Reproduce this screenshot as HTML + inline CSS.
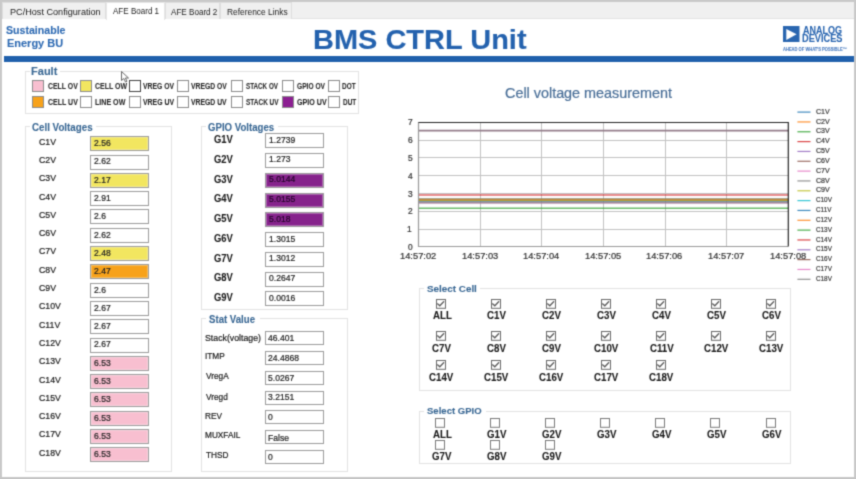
<!DOCTYPE html><html><head><meta charset="utf-8"><style>

*{box-sizing:border-box;margin:0;padding:0}
html,body{width:856px;height:479px;overflow:hidden;background:#fff;font-family:"Liberation Sans",sans-serif}
body{filter:url(#soft)}
.abs{position:absolute}
.t{position:absolute;white-space:nowrap;line-height:1;transform-origin:0 0}
.grp{position:absolute;border:1px solid #e3e3e3}
.fb{position:absolute;width:12px;height:12px;border:1px solid #8c8c8c;background:#fff}
.tb{position:absolute;width:59px;height:15px;border:1px solid #9c9c9c;background:#fff;box-shadow:inset 0 0 0 1px rgba(255,255,255,0.3)}

</style></head><body>
<svg width="0" height="0" style="position:absolute;left:0;top:0"><filter id="soft" x="0" y="0" width="100%" height="100%" color-interpolation-filters="sRGB"><feConvolveMatrix order="3" kernelMatrix="0.028 0.111 0.028 0.111 0.444 0.111 0.028 0.111 0.028" divisor="1" edgeMode="duplicate" preserveAlpha="true"/></filter></svg>
<div class="abs" style="left:0;top:0;width:856px;height:2px;background:#c9c9c9"></div>
<div class="abs" style="left:2px;top:2px;width:852px;height:16.5px;background:#f0f0f0;border-bottom:1px solid #e3e3e3"></div>
<div class="abs" style="left:0;top:0;width:2px;height:479px;background:#c9c9c9"></div>
<div class="abs" style="left:854px;top:0;width:2px;height:479px;background:#c9c9c9"></div>
<div class="abs" style="left:0;top:477px;width:856px;height:2px;background:#c6c6c6"></div>
<div class="abs" style="left:2px;top:2px;width:104px;height:16.5px;background:#f0f0f0;border:1px solid #dedede;border-bottom:none"></div>
<div class="t" style="left:9.89px;top:8.00px;font-size:9px;font-weight:400;color:#222;-webkit-text-stroke:0.22px currentColor;transform:scaleX(1.0125);-webkit-text-stroke:0;">PC/Host Configuration</div>
<div class="abs" style="left:106px;top:2px;width:59px;height:17.5px;background:#fff;border:1px solid #e6e6e6;border-bottom:none"></div>
<div class="t" style="left:113.40px;top:6.60px;font-size:9px;font-weight:400;color:#222;-webkit-text-stroke:0.22px currentColor;transform:scaleX(0.8941);-webkit-text-stroke:0;">AFE Board 1</div>
<div class="abs" style="left:165px;top:2px;width:55px;height:16.5px;background:#f0f0f0;border:1px solid #dedede;border-bottom:none"></div>
<div class="t" style="left:170.60px;top:8.20px;font-size:9px;font-weight:400;color:#222;-webkit-text-stroke:0.22px currentColor;transform:scaleX(0.9000);-webkit-text-stroke:0;">AFE Board 2</div>
<div class="abs" style="left:220px;top:2px;width:72px;height:16.5px;background:#f0f0f0;border:1px solid #dedede;border-bottom:none"></div>
<div class="t" style="left:227.07px;top:8.20px;font-size:9px;font-weight:400;color:#222;-webkit-text-stroke:0.22px currentColor;transform:scaleX(0.9328);-webkit-text-stroke:0;">Reference Links</div>
<div class="t" style="left:6.00px;top:24.60px;font-size:10.6px;font-weight:700;color:#2f6bb3;-webkit-text-stroke:0.1px currentColor;">Sustainable</div>
<div class="t" style="left:7.06px;top:38.20px;font-size:10.6px;font-weight:700;color:#2f6bb3;-webkit-text-stroke:0.1px currentColor;transform:scaleX(1.0358);">Energy BU</div>
<div class="t" style="left:313.47px;top:25.30px;font-size:28.5px;font-weight:700;color:#2462ae;-webkit-text-stroke:0.1px currentColor;transform:scaleX(1.0168);">BMS CTRL Unit</div>
<div class="abs" style="left:3.5px;top:56px;width:850px;height:6px;background:#2060ac"></div>
<svg class="abs" style="left:783px;top:25.8px" width="16.5" height="16.5" viewBox="0 0 16.5 16.5"><rect width="16.5" height="16.5" fill="#2a66b0"/><path d="M3.3 3.1 L13.6 8.25 L3.3 13.9 Z" fill="#fff"/></svg>
<div class="t" style="left:803.10px;top:25.00px;font-size:10.6px;font-weight:700;color:#2a66b0;-webkit-text-stroke:0.1px currentColor;transform:scaleX(0.8500);">ANALOG</div>
<div class="t" style="left:802.23px;top:33.30px;font-size:10.6px;font-weight:700;color:#2a66b0;-webkit-text-stroke:0.1px currentColor;transform:scaleX(0.8689);">DEVICES</div>
<div class="t" style="left:782.70px;top:46.80px;font-size:5px;font-weight:700;color:#4a7cc0;-webkit-text-stroke:0.1px currentColor;transform:scaleX(0.8141);">AHEAD OF WHAT'S POSSIBLE™</div>
<div class="grp" style="left:25px;top:71px;width:334px;height:43px"></div>
<div class="abs" style="left:30px;top:66px;width:30px;height:8px;background:#fff"></div>
<div class="t" style="left:31.46px;top:65.90px;font-size:10.6px;font-weight:700;color:#3a6894;-webkit-text-stroke:0.1px currentColor;transform:scaleX(1.0417);">Fault</div>
<div class="fb" style="left:32px;top:79.7px;background:#f8bfd0"></div>
<div class="t" style="left:47.50px;top:82.50px;font-size:8.2px;font-weight:700;color:#2a2a2a;-webkit-text-stroke:0.1px currentColor;transform:scaleX(0.8429);">CELL OV</div>
<div class="fb" style="left:80.3px;top:79.7px;background:#f2e660"></div>
<div class="t" style="left:94.90px;top:82.50px;font-size:8.2px;font-weight:700;color:#2a2a2a;-webkit-text-stroke:0.1px currentColor;transform:scaleX(0.8526);">CELL OW</div>
<div class="fb" style="left:128.9px;top:79.7px;background:#fff;border-color:#444"></div>
<div class="t" style="left:142.70px;top:82.50px;font-size:8.2px;font-weight:700;color:#2a2a2a;-webkit-text-stroke:0.1px currentColor;transform:scaleX(0.8297);">VREG OV</div>
<div class="fb" style="left:177.2px;top:79.7px;background:#fff"></div>
<div class="t" style="left:191.00px;top:82.50px;font-size:8.2px;font-weight:700;color:#2a2a2a;-webkit-text-stroke:0.1px currentColor;transform:scaleX(0.8279);">VREGD OV</div>
<div class="fb" style="left:230.7px;top:79.7px;background:#fff"></div>
<div class="t" style="left:246.00px;top:82.50px;font-size:8.2px;font-weight:700;color:#2a2a2a;-webkit-text-stroke:0.1px currentColor;transform:scaleX(0.7667);">STACK OV</div>
<div class="fb" style="left:281.9px;top:79.7px;background:#fff"></div>
<div class="t" style="left:296.50px;top:82.50px;font-size:8.2px;font-weight:700;color:#2a2a2a;-webkit-text-stroke:0.1px currentColor;transform:scaleX(0.8086);">GPIO OV</div>
<div class="fb" style="left:328px;top:79.7px;background:#fff"></div>
<div class="t" style="left:342.40px;top:82.50px;font-size:8.2px;font-weight:700;color:#2a2a2a;-webkit-text-stroke:0.1px currentColor;transform:scaleX(0.7882);">DOT</div>
<div class="fb" style="left:32px;top:96.4px;background:#f7a21b"></div>
<div class="t" style="left:47.80px;top:99.20px;font-size:8.2px;font-weight:700;color:#2a2a2a;-webkit-text-stroke:0.1px currentColor;transform:scaleX(0.8543);">CELL UV</div>
<div class="fb" style="left:80.3px;top:96.4px;background:#fff"></div>
<div class="t" style="left:95.00px;top:99.20px;font-size:8.2px;font-weight:700;color:#2a2a2a;-webkit-text-stroke:0.1px currentColor;transform:scaleX(0.8657);">LINE OW</div>
<div class="fb" style="left:128.9px;top:96.4px;background:#fff"></div>
<div class="t" style="left:142.70px;top:99.20px;font-size:8.2px;font-weight:700;color:#2a2a2a;-webkit-text-stroke:0.1px currentColor;transform:scaleX(0.8432);">VREG UV</div>
<div class="fb" style="left:177.2px;top:96.4px;background:#fff"></div>
<div class="t" style="left:191.10px;top:99.20px;font-size:8.2px;font-weight:700;color:#2a2a2a;-webkit-text-stroke:0.1px currentColor;transform:scaleX(0.8326);">VREGD UV</div>
<div class="fb" style="left:230.7px;top:96.4px;background:#fff"></div>
<div class="t" style="left:246.30px;top:99.20px;font-size:8.2px;font-weight:700;color:#2a2a2a;-webkit-text-stroke:0.1px currentColor;transform:scaleX(0.7902);">STACK UV</div>
<div class="fb" style="left:281.9px;top:96.4px;background:#8c1f92"></div>
<div class="t" style="left:296.50px;top:99.20px;font-size:8.2px;font-weight:700;color:#2a2a2a;-webkit-text-stroke:0.1px currentColor;transform:scaleX(0.8706);">GPIO UV</div>
<div class="fb" style="left:328px;top:96.4px;background:#fff"></div>
<div class="t" style="left:342.50px;top:99.20px;font-size:8.2px;font-weight:700;color:#2a2a2a;-webkit-text-stroke:0.1px currentColor;transform:scaleX(0.7824);">DUT</div>
<div class="grp" style="left:25px;top:126px;width:147px;height:345.5px"></div>
<div class="abs" style="left:30px;top:121px;width:66px;height:8px;background:#fff"></div>
<div class="t" style="left:32.10px;top:123.10px;font-size:10px;font-weight:700;color:#3a6894;-webkit-text-stroke:0.1px currentColor;transform:scaleX(0.9758);">Cell Voltages</div>
<div class="t" style="left:38.70px;top:136.60px;font-size:9.5px;font-weight:400;color:#1a1a1a;-webkit-text-stroke:0.22px currentColor;transform:scaleX(0.9200);">C1V</div>
<div class="tb" style="left:89.8px;top:136.2px;background:#f2e660"></div>
<div class="t" style="left:93.50px;top:139.10px;font-size:9px;font-weight:400;color:#222;-webkit-text-stroke:0.22px currentColor;transform:scaleX(0.9500);">2.56</div>
<div class="t" style="left:38.70px;top:154.90px;font-size:9.5px;font-weight:400;color:#1a1a1a;-webkit-text-stroke:0.22px currentColor;transform:scaleX(0.9200);">C2V</div>
<div class="tb" style="left:89.8px;top:154.5px;background:#fff"></div>
<div class="t" style="left:93.50px;top:157.40px;font-size:9px;font-weight:400;color:#222;-webkit-text-stroke:0.22px currentColor;transform:scaleX(0.9500);">2.62</div>
<div class="t" style="left:38.70px;top:173.20px;font-size:9.5px;font-weight:400;color:#1a1a1a;-webkit-text-stroke:0.22px currentColor;transform:scaleX(0.9200);">C3V</div>
<div class="tb" style="left:89.8px;top:172.8px;background:#f2e660"></div>
<div class="t" style="left:93.50px;top:175.70px;font-size:9px;font-weight:400;color:#222;-webkit-text-stroke:0.22px currentColor;transform:scaleX(0.9500);">2.17</div>
<div class="t" style="left:38.70px;top:191.50px;font-size:9.5px;font-weight:400;color:#1a1a1a;-webkit-text-stroke:0.22px currentColor;transform:scaleX(0.9200);">C4V</div>
<div class="tb" style="left:89.8px;top:191.1px;background:#fff"></div>
<div class="t" style="left:93.50px;top:194.00px;font-size:9px;font-weight:400;color:#222;-webkit-text-stroke:0.22px currentColor;transform:scaleX(0.9500);">2.91</div>
<div class="t" style="left:38.70px;top:209.80px;font-size:9.5px;font-weight:400;color:#1a1a1a;-webkit-text-stroke:0.22px currentColor;transform:scaleX(0.9200);">C5V</div>
<div class="tb" style="left:89.8px;top:209.4px;background:#fff"></div>
<div class="t" style="left:93.50px;top:212.30px;font-size:9px;font-weight:400;color:#222;-webkit-text-stroke:0.22px currentColor;transform:scaleX(0.9500);">2.6</div>
<div class="t" style="left:38.70px;top:228.10px;font-size:9.5px;font-weight:400;color:#1a1a1a;-webkit-text-stroke:0.22px currentColor;transform:scaleX(0.9200);">C6V</div>
<div class="tb" style="left:89.8px;top:227.7px;background:#fff"></div>
<div class="t" style="left:93.50px;top:230.60px;font-size:9px;font-weight:400;color:#222;-webkit-text-stroke:0.22px currentColor;transform:scaleX(0.9500);">2.62</div>
<div class="t" style="left:38.70px;top:246.40px;font-size:9.5px;font-weight:400;color:#1a1a1a;-webkit-text-stroke:0.22px currentColor;transform:scaleX(0.9200);">C7V</div>
<div class="tb" style="left:89.8px;top:246.0px;background:#f2e660"></div>
<div class="t" style="left:93.50px;top:248.90px;font-size:9px;font-weight:400;color:#222;-webkit-text-stroke:0.22px currentColor;transform:scaleX(0.9500);">2.48</div>
<div class="t" style="left:38.70px;top:264.70px;font-size:9.5px;font-weight:400;color:#1a1a1a;-webkit-text-stroke:0.22px currentColor;transform:scaleX(0.9200);">C8V</div>
<div class="tb" style="left:89.8px;top:264.3px;background:#f7a21b"></div>
<div class="t" style="left:93.50px;top:267.20px;font-size:9px;font-weight:400;color:#222;-webkit-text-stroke:0.22px currentColor;transform:scaleX(0.9500);">2.47</div>
<div class="t" style="left:38.70px;top:283.00px;font-size:9.5px;font-weight:400;color:#1a1a1a;-webkit-text-stroke:0.22px currentColor;transform:scaleX(0.9200);">C9V</div>
<div class="tb" style="left:89.8px;top:282.6px;background:#fff"></div>
<div class="t" style="left:93.50px;top:285.50px;font-size:9px;font-weight:400;color:#222;-webkit-text-stroke:0.22px currentColor;transform:scaleX(0.9500);">2.6</div>
<div class="t" style="left:38.70px;top:301.30px;font-size:9.5px;font-weight:400;color:#1a1a1a;-webkit-text-stroke:0.22px currentColor;transform:scaleX(0.9200);">C10V</div>
<div class="tb" style="left:89.8px;top:300.9px;background:#fff"></div>
<div class="t" style="left:93.50px;top:303.80px;font-size:9px;font-weight:400;color:#222;-webkit-text-stroke:0.22px currentColor;transform:scaleX(0.9500);">2.67</div>
<div class="t" style="left:38.70px;top:319.60px;font-size:9.5px;font-weight:400;color:#1a1a1a;-webkit-text-stroke:0.22px currentColor;transform:scaleX(0.9200);">C11V</div>
<div class="tb" style="left:89.8px;top:319.2px;background:#fff"></div>
<div class="t" style="left:93.50px;top:322.10px;font-size:9px;font-weight:400;color:#222;-webkit-text-stroke:0.22px currentColor;transform:scaleX(0.9500);">2.67</div>
<div class="t" style="left:38.70px;top:337.90px;font-size:9.5px;font-weight:400;color:#1a1a1a;-webkit-text-stroke:0.22px currentColor;transform:scaleX(0.9200);">C12V</div>
<div class="tb" style="left:89.8px;top:337.5px;background:#fff"></div>
<div class="t" style="left:93.50px;top:340.40px;font-size:9px;font-weight:400;color:#222;-webkit-text-stroke:0.22px currentColor;transform:scaleX(0.9500);">2.67</div>
<div class="t" style="left:38.70px;top:356.20px;font-size:9.5px;font-weight:400;color:#1a1a1a;-webkit-text-stroke:0.22px currentColor;transform:scaleX(0.9200);">C13V</div>
<div class="tb" style="left:89.8px;top:355.8px;background:#f8bfd0"></div>
<div class="t" style="left:93.50px;top:358.70px;font-size:9px;font-weight:400;color:#222;-webkit-text-stroke:0.22px currentColor;transform:scaleX(0.9500);">6.53</div>
<div class="t" style="left:38.70px;top:374.50px;font-size:9.5px;font-weight:400;color:#1a1a1a;-webkit-text-stroke:0.22px currentColor;transform:scaleX(0.9200);">C14V</div>
<div class="tb" style="left:89.8px;top:374.1px;background:#f8bfd0"></div>
<div class="t" style="left:93.50px;top:377.00px;font-size:9px;font-weight:400;color:#222;-webkit-text-stroke:0.22px currentColor;transform:scaleX(0.9500);">6.53</div>
<div class="t" style="left:38.70px;top:392.80px;font-size:9.5px;font-weight:400;color:#1a1a1a;-webkit-text-stroke:0.22px currentColor;transform:scaleX(0.9200);">C15V</div>
<div class="tb" style="left:89.8px;top:392.4px;background:#f8bfd0"></div>
<div class="t" style="left:93.50px;top:395.30px;font-size:9px;font-weight:400;color:#222;-webkit-text-stroke:0.22px currentColor;transform:scaleX(0.9500);">6.53</div>
<div class="t" style="left:38.70px;top:411.10px;font-size:9.5px;font-weight:400;color:#1a1a1a;-webkit-text-stroke:0.22px currentColor;transform:scaleX(0.9200);">C16V</div>
<div class="tb" style="left:89.8px;top:410.7px;background:#f8bfd0"></div>
<div class="t" style="left:93.50px;top:413.60px;font-size:9px;font-weight:400;color:#222;-webkit-text-stroke:0.22px currentColor;transform:scaleX(0.9500);">6.53</div>
<div class="t" style="left:38.70px;top:429.40px;font-size:9.5px;font-weight:400;color:#1a1a1a;-webkit-text-stroke:0.22px currentColor;transform:scaleX(0.9200);">C17V</div>
<div class="tb" style="left:89.8px;top:429.0px;background:#f8bfd0"></div>
<div class="t" style="left:93.50px;top:431.90px;font-size:9px;font-weight:400;color:#222;-webkit-text-stroke:0.22px currentColor;transform:scaleX(0.9500);">6.53</div>
<div class="t" style="left:38.70px;top:447.70px;font-size:9.5px;font-weight:400;color:#1a1a1a;-webkit-text-stroke:0.22px currentColor;transform:scaleX(0.9200);">C18V</div>
<div class="tb" style="left:89.8px;top:447.3px;background:#f8bfd0"></div>
<div class="t" style="left:93.50px;top:450.20px;font-size:9px;font-weight:400;color:#222;-webkit-text-stroke:0.22px currentColor;transform:scaleX(0.9500);">6.53</div>
<div class="grp" style="left:201px;top:126px;width:147px;height:183.5px"></div>
<div class="abs" style="left:206px;top:121px;width:72px;height:8px;background:#fff"></div>
<div class="t" style="left:208.20px;top:123.10px;font-size:10px;font-weight:700;color:#3a6894;-webkit-text-stroke:0.1px currentColor;transform:scaleX(0.9623);">GPIO Voltages</div>
<div class="t" style="left:214.30px;top:134.00px;font-size:10.8px;font-weight:700;color:#1a1a1a;-webkit-text-stroke:0.1px currentColor;transform:scaleX(0.8727);">G1V</div>
<div class="tb" style="left:265.2px;top:133.2px;background:#fff"></div>
<div class="t" style="left:268.70px;top:135.70px;font-size:9px;font-weight:400;color:#222;-webkit-text-stroke:0.22px currentColor;transform:scaleX(0.9500);">1.2739</div>
<div class="t" style="left:214.30px;top:153.78px;font-size:10.8px;font-weight:700;color:#1a1a1a;-webkit-text-stroke:0.1px currentColor;transform:scaleX(0.8727);">G2V</div>
<div class="tb" style="left:265.2px;top:153.0px;background:#fff"></div>
<div class="t" style="left:268.70px;top:155.48px;font-size:9px;font-weight:400;color:#222;-webkit-text-stroke:0.22px currentColor;transform:scaleX(0.9500);">1.273</div>
<div class="t" style="left:214.30px;top:173.56px;font-size:10.8px;font-weight:700;color:#1a1a1a;-webkit-text-stroke:0.1px currentColor;transform:scaleX(0.8727);">G3V</div>
<div class="tb" style="left:265.2px;top:172.8px;background:#86238c"></div>
<div class="t" style="left:268.70px;top:175.26px;font-size:9px;font-weight:400;color:#24062a;-webkit-text-stroke:0.22px currentColor;transform:scaleX(0.9500);">5.0144</div>
<div class="t" style="left:214.30px;top:193.34px;font-size:10.8px;font-weight:700;color:#1a1a1a;-webkit-text-stroke:0.1px currentColor;transform:scaleX(0.8727);">G4V</div>
<div class="tb" style="left:265.2px;top:192.5px;background:#86238c"></div>
<div class="t" style="left:268.70px;top:195.04px;font-size:9px;font-weight:400;color:#24062a;-webkit-text-stroke:0.22px currentColor;transform:scaleX(0.9500);">5.0155</div>
<div class="t" style="left:214.30px;top:213.12px;font-size:10.8px;font-weight:700;color:#1a1a1a;-webkit-text-stroke:0.1px currentColor;transform:scaleX(0.8727);">G5V</div>
<div class="tb" style="left:265.2px;top:212.3px;background:#86238c"></div>
<div class="t" style="left:268.70px;top:214.82px;font-size:9px;font-weight:400;color:#24062a;-webkit-text-stroke:0.22px currentColor;transform:scaleX(0.9500);">5.018</div>
<div class="t" style="left:214.30px;top:232.90px;font-size:10.8px;font-weight:700;color:#1a1a1a;-webkit-text-stroke:0.1px currentColor;transform:scaleX(0.8727);">G6V</div>
<div class="tb" style="left:265.2px;top:232.1px;background:#fff"></div>
<div class="t" style="left:268.70px;top:234.60px;font-size:9px;font-weight:400;color:#222;-webkit-text-stroke:0.22px currentColor;transform:scaleX(0.9500);">1.3015</div>
<div class="t" style="left:214.30px;top:252.68px;font-size:10.8px;font-weight:700;color:#1a1a1a;-webkit-text-stroke:0.1px currentColor;transform:scaleX(0.8727);">G7V</div>
<div class="tb" style="left:265.2px;top:251.9px;background:#fff"></div>
<div class="t" style="left:268.70px;top:254.38px;font-size:9px;font-weight:400;color:#222;-webkit-text-stroke:0.22px currentColor;transform:scaleX(0.9500);">1.3012</div>
<div class="t" style="left:214.30px;top:272.46px;font-size:10.8px;font-weight:700;color:#1a1a1a;-webkit-text-stroke:0.1px currentColor;transform:scaleX(0.8727);">G8V</div>
<div class="tb" style="left:265.2px;top:271.7px;background:#fff"></div>
<div class="t" style="left:268.70px;top:274.16px;font-size:9px;font-weight:400;color:#222;-webkit-text-stroke:0.22px currentColor;transform:scaleX(0.9500);">0.2647</div>
<div class="t" style="left:214.30px;top:292.24px;font-size:10.8px;font-weight:700;color:#1a1a1a;-webkit-text-stroke:0.1px currentColor;transform:scaleX(0.8727);">G9V</div>
<div class="tb" style="left:265.2px;top:291.4px;background:#fff"></div>
<div class="t" style="left:268.70px;top:293.94px;font-size:9px;font-weight:400;color:#222;-webkit-text-stroke:0.22px currentColor;transform:scaleX(0.9500);">0.0016</div>
<div class="grp" style="left:201px;top:318px;width:147px;height:153.5px"></div>
<div class="abs" style="left:206px;top:313px;width:54px;height:8px;background:#fff"></div>
<div class="t" style="left:208.90px;top:315.30px;font-size:10px;font-weight:700;color:#3a6894;-webkit-text-stroke:0.1px currentColor;transform:scaleX(0.9625);">Stat Value</div>
<div class="t" style="left:204.95px;top:333.70px;font-size:9.2px;font-weight:400;color:#1a1a1a;-webkit-text-stroke:0.22px currentColor;transform:scaleX(0.9526);">Stack(voltage)</div>
<div class="tb" style="left:265.1px;top:331.4px;height:14px"></div>
<div class="t" style="left:268.40px;top:334.10px;font-size:9px;font-weight:400;color:#222;-webkit-text-stroke:0.22px currentColor;transform:scaleX(0.9500);">46.401</div>
<div class="t" style="left:205.00px;top:352.45px;font-size:9.2px;font-weight:400;color:#1a1a1a;-webkit-text-stroke:0.22px currentColor;transform:scaleX(0.9000);">ITMP</div>
<div class="tb" style="left:265.1px;top:351.1px;height:14px"></div>
<div class="t" style="left:268.40px;top:353.85px;font-size:9px;font-weight:400;color:#222;-webkit-text-stroke:0.22px currentColor;transform:scaleX(0.9500);">24.4868</div>
<div class="t" style="left:205.90px;top:372.20px;font-size:9.2px;font-weight:400;color:#1a1a1a;-webkit-text-stroke:0.22px currentColor;transform:scaleX(0.9000);">VregA</div>
<div class="tb" style="left:265.1px;top:370.9px;height:14px"></div>
<div class="t" style="left:268.40px;top:373.60px;font-size:9px;font-weight:400;color:#222;-webkit-text-stroke:0.22px currentColor;transform:scaleX(0.9500);">5.0267</div>
<div class="t" style="left:205.90px;top:392.95px;font-size:9.2px;font-weight:400;color:#1a1a1a;-webkit-text-stroke:0.22px currentColor;transform:scaleX(0.9000);">Vregd</div>
<div class="tb" style="left:265.1px;top:390.6px;height:14px"></div>
<div class="t" style="left:268.40px;top:393.35px;font-size:9px;font-weight:400;color:#222;-webkit-text-stroke:0.22px currentColor;transform:scaleX(0.9500);">3.2151</div>
<div class="t" style="left:205.00px;top:411.70px;font-size:9.2px;font-weight:400;color:#1a1a1a;-webkit-text-stroke:0.22px currentColor;transform:scaleX(0.9000);">REV</div>
<div class="tb" style="left:265.1px;top:410.4px;height:14px"></div>
<div class="t" style="left:268.40px;top:413.10px;font-size:9px;font-weight:400;color:#222;-webkit-text-stroke:0.22px currentColor;transform:scaleX(0.9500);">0</div>
<div class="t" style="left:205.00px;top:431.45px;font-size:9.2px;font-weight:400;color:#1a1a1a;-webkit-text-stroke:0.22px currentColor;transform:scaleX(0.9000);">MUXFAIL</div>
<div class="tb" style="left:265.1px;top:430.1px;height:14px"></div>
<div class="t" style="left:268.40px;top:433.85px;font-size:9px;font-weight:400;color:#222;-webkit-text-stroke:0.22px currentColor;transform:scaleX(0.9500);">False</div>
<div class="t" style="left:205.90px;top:451.20px;font-size:9.2px;font-weight:400;color:#1a1a1a;-webkit-text-stroke:0.22px currentColor;transform:scaleX(0.9000);">THSD</div>
<div class="tb" style="left:265.1px;top:449.9px;height:14px"></div>
<div class="t" style="left:268.40px;top:452.60px;font-size:9px;font-weight:400;color:#222;-webkit-text-stroke:0.22px currentColor;transform:scaleX(0.9500);">0</div>
<svg class="abs" style="left:0;top:0" width="856" height="479" viewBox="0 0 856 479"><line x1="418.6" y1="229.50" x2="788.3" y2="229.50" stroke="#c2c2c2" stroke-width="1"/><line x1="418.6" y1="211.50" x2="788.3" y2="211.50" stroke="#c2c2c2" stroke-width="1"/><line x1="418.6" y1="193.50" x2="788.3" y2="193.50" stroke="#c2c2c2" stroke-width="1"/><line x1="418.6" y1="175.50" x2="788.3" y2="175.50" stroke="#c2c2c2" stroke-width="1"/><line x1="418.6" y1="157.50" x2="788.3" y2="157.50" stroke="#c2c2c2" stroke-width="1"/><line x1="418.6" y1="140.50" x2="788.3" y2="140.50" stroke="#c2c2c2" stroke-width="1"/><line x1="480.50" y1="122.3" x2="480.50" y2="246.8" stroke="#c2c2c2" stroke-width="1"/><line x1="541.50" y1="122.3" x2="541.50" y2="246.8" stroke="#c2c2c2" stroke-width="1"/><line x1="603.50" y1="122.3" x2="603.50" y2="246.8" stroke="#c2c2c2" stroke-width="1"/><line x1="665.50" y1="122.3" x2="665.50" y2="246.8" stroke="#c2c2c2" stroke-width="1"/><line x1="726.50" y1="122.3" x2="726.50" y2="246.8" stroke="#c2c2c2" stroke-width="1"/><line x1="418.6" y1="201.27" x2="788.3" y2="201.27" stroke="#1f77b4" stroke-opacity="0.7" stroke-width="1.5"/><line x1="418.6" y1="200.20" x2="788.3" y2="200.20" stroke="#ff7f0e" stroke-opacity="0.7" stroke-width="1.5"/><line x1="418.6" y1="208.21" x2="788.3" y2="208.21" stroke="#2ca02c" stroke-opacity="0.7" stroke-width="1.5"/><line x1="418.6" y1="195.04" x2="788.3" y2="195.04" stroke="#d62728" stroke-opacity="0.7" stroke-width="1.5"/><line x1="418.6" y1="200.56" x2="788.3" y2="200.56" stroke="#9467bd" stroke-opacity="0.7" stroke-width="1.5"/><line x1="418.6" y1="200.20" x2="788.3" y2="200.20" stroke="#8c564b" stroke-opacity="0.7" stroke-width="1.5"/><line x1="418.6" y1="202.69" x2="788.3" y2="202.69" stroke="#e377c2" stroke-opacity="0.7" stroke-width="1.5"/><line x1="418.6" y1="202.87" x2="788.3" y2="202.87" stroke="#7f7f7f" stroke-opacity="0.7" stroke-width="1.5"/><line x1="418.6" y1="200.56" x2="788.3" y2="200.56" stroke="#bcbd22" stroke-opacity="0.7" stroke-width="1.5"/><line x1="418.6" y1="199.31" x2="788.3" y2="199.31" stroke="#17becf" stroke-opacity="0.7" stroke-width="1.5"/><line x1="418.6" y1="199.31" x2="788.3" y2="199.31" stroke="#1f77b4" stroke-opacity="0.7" stroke-width="1.5"/><line x1="418.6" y1="199.31" x2="788.3" y2="199.31" stroke="#ff7f0e" stroke-opacity="0.7" stroke-width="1.5"/><line x1="418.6" y1="130.66" x2="788.3" y2="130.66" stroke="#937c8a" stroke-width="1.7"/><path d="M418.5 122 V246.5 H788" fill="none" stroke="#9a9a9a" stroke-width="1.2"/><path d="M418.5 122.5 H788.3 V246.5" fill="none" stroke="#262626" stroke-width="1.2"/><line x1="797.4" y1="112.10" x2="810.5" y2="112.10" stroke="#1f77b4" stroke-opacity="0.85" stroke-width="1.2"/><line x1="797.4" y1="121.94" x2="810.5" y2="121.94" stroke="#ff7f0e" stroke-opacity="0.85" stroke-width="1.2"/><line x1="797.4" y1="131.77" x2="810.5" y2="131.77" stroke="#2ca02c" stroke-opacity="0.85" stroke-width="1.2"/><line x1="797.4" y1="141.60" x2="810.5" y2="141.60" stroke="#d62728" stroke-opacity="0.85" stroke-width="1.2"/><line x1="797.4" y1="151.44" x2="810.5" y2="151.44" stroke="#9467bd" stroke-opacity="0.85" stroke-width="1.2"/><line x1="797.4" y1="161.28" x2="810.5" y2="161.28" stroke="#8c564b" stroke-opacity="0.85" stroke-width="1.2"/><line x1="797.4" y1="171.11" x2="810.5" y2="171.11" stroke="#e377c2" stroke-opacity="0.85" stroke-width="1.2"/><line x1="797.4" y1="180.94" x2="810.5" y2="180.94" stroke="#7f7f7f" stroke-opacity="0.85" stroke-width="1.2"/><line x1="797.4" y1="190.78" x2="810.5" y2="190.78" stroke="#bcbd22" stroke-opacity="0.85" stroke-width="1.2"/><line x1="797.4" y1="200.62" x2="810.5" y2="200.62" stroke="#17becf" stroke-opacity="0.85" stroke-width="1.2"/><line x1="797.4" y1="210.45" x2="810.5" y2="210.45" stroke="#1f77b4" stroke-opacity="0.85" stroke-width="1.2"/><line x1="797.4" y1="220.28" x2="810.5" y2="220.28" stroke="#ff7f0e" stroke-opacity="0.85" stroke-width="1.2"/><line x1="797.4" y1="230.12" x2="810.5" y2="230.12" stroke="#2ca02c" stroke-opacity="0.85" stroke-width="1.2"/><line x1="797.4" y1="239.96" x2="810.5" y2="239.96" stroke="#d62728" stroke-opacity="0.85" stroke-width="1.2"/><line x1="797.4" y1="249.79" x2="810.5" y2="249.79" stroke="#9467bd" stroke-opacity="0.85" stroke-width="1.2"/><line x1="797.4" y1="259.62" x2="810.5" y2="259.62" stroke="#8c564b" stroke-opacity="0.85" stroke-width="1.2"/><line x1="797.4" y1="269.46" x2="810.5" y2="269.46" stroke="#e377c2" stroke-opacity="0.85" stroke-width="1.2"/><line x1="797.4" y1="279.30" x2="810.5" y2="279.30" stroke="#7f7f7f" stroke-opacity="0.85" stroke-width="1.2"/></svg>
<div class="t" style="left:408.00px;top:242.90px;font-size:8.4px;font-weight:400;color:#333;-webkit-text-stroke:0.22px currentColor;">0</div>
<div class="t" style="left:407.00px;top:225.11px;font-size:8.4px;font-weight:400;color:#333;-webkit-text-stroke:0.22px currentColor;">1</div>
<div class="t" style="left:408.00px;top:207.33px;font-size:8.4px;font-weight:400;color:#333;-webkit-text-stroke:0.22px currentColor;">2</div>
<div class="t" style="left:408.00px;top:189.54px;font-size:8.4px;font-weight:400;color:#333;-webkit-text-stroke:0.22px currentColor;">3</div>
<div class="t" style="left:408.00px;top:171.76px;font-size:8.4px;font-weight:400;color:#333;-webkit-text-stroke:0.22px currentColor;">4</div>
<div class="t" style="left:408.00px;top:153.97px;font-size:8.4px;font-weight:400;color:#333;-webkit-text-stroke:0.22px currentColor;">5</div>
<div class="t" style="left:408.00px;top:136.19px;font-size:8.4px;font-weight:400;color:#333;-webkit-text-stroke:0.22px currentColor;">6</div>
<div class="t" style="left:408.00px;top:118.40px;font-size:8.4px;font-weight:400;color:#333;-webkit-text-stroke:0.22px currentColor;">7</div>
<div class="t" style="left:399.96px;top:252.20px;font-size:9px;font-weight:400;color:#333;-webkit-text-stroke:0.22px currentColor;transform:scaleX(1.0353);">14:57:02</div>
<div class="t" style="left:461.58px;top:252.20px;font-size:9px;font-weight:400;color:#333;-webkit-text-stroke:0.22px currentColor;transform:scaleX(1.0353);">14:57:03</div>
<div class="t" style="left:523.20px;top:252.20px;font-size:9px;font-weight:400;color:#333;-webkit-text-stroke:0.22px currentColor;transform:scaleX(1.0353);">14:57:04</div>
<div class="t" style="left:584.81px;top:252.20px;font-size:9px;font-weight:400;color:#333;-webkit-text-stroke:0.22px currentColor;transform:scaleX(1.0353);">14:57:05</div>
<div class="t" style="left:646.43px;top:252.20px;font-size:9px;font-weight:400;color:#333;-webkit-text-stroke:0.22px currentColor;transform:scaleX(1.0353);">14:57:06</div>
<div class="t" style="left:708.05px;top:252.20px;font-size:9px;font-weight:400;color:#333;-webkit-text-stroke:0.22px currentColor;transform:scaleX(1.0353);">14:57:07</div>
<div class="t" style="left:769.66px;top:252.20px;font-size:9px;font-weight:400;color:#333;-webkit-text-stroke:0.22px currentColor;transform:scaleX(1.0353);">14:57:08</div>
<div class="t" style="left:815.70px;top:107.70px;font-size:7.3px;font-weight:400;color:#3a3a3a;-webkit-text-stroke:0.22px currentColor;transform:scaleX(0.9700);">C1V</div>
<div class="t" style="left:815.70px;top:117.53px;font-size:7.3px;font-weight:400;color:#3a3a3a;-webkit-text-stroke:0.22px currentColor;transform:scaleX(0.9700);">C2V</div>
<div class="t" style="left:815.70px;top:127.37px;font-size:7.3px;font-weight:400;color:#3a3a3a;-webkit-text-stroke:0.22px currentColor;transform:scaleX(0.9700);">C3V</div>
<div class="t" style="left:815.70px;top:137.20px;font-size:7.3px;font-weight:400;color:#3a3a3a;-webkit-text-stroke:0.22px currentColor;transform:scaleX(0.9700);">C4V</div>
<div class="t" style="left:815.70px;top:147.04px;font-size:7.3px;font-weight:400;color:#3a3a3a;-webkit-text-stroke:0.22px currentColor;transform:scaleX(0.9700);">C5V</div>
<div class="t" style="left:815.70px;top:156.88px;font-size:7.3px;font-weight:400;color:#3a3a3a;-webkit-text-stroke:0.22px currentColor;transform:scaleX(0.9700);">C6V</div>
<div class="t" style="left:815.70px;top:166.71px;font-size:7.3px;font-weight:400;color:#3a3a3a;-webkit-text-stroke:0.22px currentColor;transform:scaleX(0.9700);">C7V</div>
<div class="t" style="left:815.70px;top:176.54px;font-size:7.3px;font-weight:400;color:#3a3a3a;-webkit-text-stroke:0.22px currentColor;transform:scaleX(0.9700);">C8V</div>
<div class="t" style="left:815.70px;top:186.38px;font-size:7.3px;font-weight:400;color:#3a3a3a;-webkit-text-stroke:0.22px currentColor;transform:scaleX(0.9700);">C9V</div>
<div class="t" style="left:815.70px;top:196.22px;font-size:7.3px;font-weight:400;color:#3a3a3a;-webkit-text-stroke:0.22px currentColor;transform:scaleX(0.8700);">C10V</div>
<div class="t" style="left:815.70px;top:206.05px;font-size:7.3px;font-weight:400;color:#3a3a3a;-webkit-text-stroke:0.22px currentColor;transform:scaleX(0.8700);">C11V</div>
<div class="t" style="left:815.70px;top:215.88px;font-size:7.3px;font-weight:400;color:#3a3a3a;-webkit-text-stroke:0.22px currentColor;transform:scaleX(0.8700);">C12V</div>
<div class="t" style="left:815.70px;top:225.72px;font-size:7.3px;font-weight:400;color:#3a3a3a;-webkit-text-stroke:0.22px currentColor;transform:scaleX(0.8700);">C13V</div>
<div class="t" style="left:815.70px;top:235.56px;font-size:7.3px;font-weight:400;color:#3a3a3a;-webkit-text-stroke:0.22px currentColor;transform:scaleX(0.8700);">C14V</div>
<div class="t" style="left:815.70px;top:245.39px;font-size:7.3px;font-weight:400;color:#3a3a3a;-webkit-text-stroke:0.22px currentColor;transform:scaleX(0.8700);">C15V</div>
<div class="t" style="left:815.70px;top:255.23px;font-size:7.3px;font-weight:400;color:#3a3a3a;-webkit-text-stroke:0.22px currentColor;transform:scaleX(0.8700);">C16V</div>
<div class="t" style="left:815.70px;top:265.06px;font-size:7.3px;font-weight:400;color:#3a3a3a;-webkit-text-stroke:0.22px currentColor;transform:scaleX(0.8700);">C17V</div>
<div class="t" style="left:815.70px;top:274.90px;font-size:7.3px;font-weight:400;color:#3a3a3a;-webkit-text-stroke:0.22px currentColor;transform:scaleX(0.8700);">C18V</div>
<div class="t" style="left:504.89px;top:85.70px;font-size:14.3px;font-weight:400;color:#4a6f98;-webkit-text-stroke:0.22px currentColor;transform:scaleX(1.0055);">Cell voltage measurement</div>
<div class="grp" style="left:419px;top:288px;width:372px;height:103px"></div>
<div class="abs" style="left:424px;top:284px;width:56px;height:8px;background:#fff"></div>
<div class="t" style="left:426.80px;top:284.20px;font-size:9.8px;font-weight:700;color:#3a6894;-webkit-text-stroke:0.1px currentColor;transform:scaleX(1.0061);">Select Cell</div>
<svg class="abs" style="left:435.80px;top:298.8px" width="10" height="10" viewBox="0 0 10 10"><rect x="0.5" y="0.5" width="9" height="8.8" fill="#fff" stroke="#6a6a6a" stroke-width="1"/><path d="M1.3 4.5 L3.8 6.8 L8.1 2.3" fill="none" stroke="#5a5a5a" stroke-width="1.25"/></svg>
<svg class="abs" style="left:490.85px;top:298.8px" width="10" height="10" viewBox="0 0 10 10"><rect x="0.5" y="0.5" width="9" height="8.8" fill="#fff" stroke="#6a6a6a" stroke-width="1"/><path d="M1.3 4.5 L3.8 6.8 L8.1 2.3" fill="none" stroke="#5a5a5a" stroke-width="1.25"/></svg>
<svg class="abs" style="left:545.90px;top:298.8px" width="10" height="10" viewBox="0 0 10 10"><rect x="0.5" y="0.5" width="9" height="8.8" fill="#fff" stroke="#6a6a6a" stroke-width="1"/><path d="M1.3 4.5 L3.8 6.8 L8.1 2.3" fill="none" stroke="#5a5a5a" stroke-width="1.25"/></svg>
<svg class="abs" style="left:600.95px;top:298.8px" width="10" height="10" viewBox="0 0 10 10"><rect x="0.5" y="0.5" width="9" height="8.8" fill="#fff" stroke="#6a6a6a" stroke-width="1"/><path d="M1.3 4.5 L3.8 6.8 L8.1 2.3" fill="none" stroke="#5a5a5a" stroke-width="1.25"/></svg>
<svg class="abs" style="left:656.00px;top:298.8px" width="10" height="10" viewBox="0 0 10 10"><rect x="0.5" y="0.5" width="9" height="8.8" fill="#fff" stroke="#6a6a6a" stroke-width="1"/><path d="M1.3 4.5 L3.8 6.8 L8.1 2.3" fill="none" stroke="#5a5a5a" stroke-width="1.25"/></svg>
<svg class="abs" style="left:711.05px;top:298.8px" width="10" height="10" viewBox="0 0 10 10"><rect x="0.5" y="0.5" width="9" height="8.8" fill="#fff" stroke="#6a6a6a" stroke-width="1"/><path d="M1.3 4.5 L3.8 6.8 L8.1 2.3" fill="none" stroke="#5a5a5a" stroke-width="1.25"/></svg>
<svg class="abs" style="left:766.10px;top:298.8px" width="10" height="10" viewBox="0 0 10 10"><rect x="0.5" y="0.5" width="9" height="8.8" fill="#fff" stroke="#6a6a6a" stroke-width="1"/><path d="M1.3 4.5 L3.8 6.8 L8.1 2.3" fill="none" stroke="#5a5a5a" stroke-width="1.25"/></svg>
<svg class="abs" style="left:435.80px;top:331.2px" width="10" height="10" viewBox="0 0 10 10"><rect x="0.5" y="0.5" width="9" height="8.8" fill="#fff" stroke="#6a6a6a" stroke-width="1"/><path d="M1.3 4.5 L3.8 6.8 L8.1 2.3" fill="none" stroke="#5a5a5a" stroke-width="1.25"/></svg>
<svg class="abs" style="left:490.85px;top:331.2px" width="10" height="10" viewBox="0 0 10 10"><rect x="0.5" y="0.5" width="9" height="8.8" fill="#fff" stroke="#6a6a6a" stroke-width="1"/><path d="M1.3 4.5 L3.8 6.8 L8.1 2.3" fill="none" stroke="#5a5a5a" stroke-width="1.25"/></svg>
<svg class="abs" style="left:545.90px;top:331.2px" width="10" height="10" viewBox="0 0 10 10"><rect x="0.5" y="0.5" width="9" height="8.8" fill="#fff" stroke="#6a6a6a" stroke-width="1"/><path d="M1.3 4.5 L3.8 6.8 L8.1 2.3" fill="none" stroke="#5a5a5a" stroke-width="1.25"/></svg>
<svg class="abs" style="left:600.95px;top:331.2px" width="10" height="10" viewBox="0 0 10 10"><rect x="0.5" y="0.5" width="9" height="8.8" fill="#fff" stroke="#6a6a6a" stroke-width="1"/><path d="M1.3 4.5 L3.8 6.8 L8.1 2.3" fill="none" stroke="#5a5a5a" stroke-width="1.25"/></svg>
<svg class="abs" style="left:656.00px;top:331.2px" width="10" height="10" viewBox="0 0 10 10"><rect x="0.5" y="0.5" width="9" height="8.8" fill="#fff" stroke="#6a6a6a" stroke-width="1"/><path d="M1.3 4.5 L3.8 6.8 L8.1 2.3" fill="none" stroke="#5a5a5a" stroke-width="1.25"/></svg>
<svg class="abs" style="left:711.05px;top:331.2px" width="10" height="10" viewBox="0 0 10 10"><rect x="0.5" y="0.5" width="9" height="8.8" fill="#fff" stroke="#6a6a6a" stroke-width="1"/><path d="M1.3 4.5 L3.8 6.8 L8.1 2.3" fill="none" stroke="#5a5a5a" stroke-width="1.25"/></svg>
<svg class="abs" style="left:766.10px;top:331.2px" width="10" height="10" viewBox="0 0 10 10"><rect x="0.5" y="0.5" width="9" height="8.8" fill="#fff" stroke="#6a6a6a" stroke-width="1"/><path d="M1.3 4.5 L3.8 6.8 L8.1 2.3" fill="none" stroke="#5a5a5a" stroke-width="1.25"/></svg>
<svg class="abs" style="left:435.80px;top:360.4px" width="10" height="10" viewBox="0 0 10 10"><rect x="0.5" y="0.5" width="9" height="8.8" fill="#fff" stroke="#6a6a6a" stroke-width="1"/><path d="M1.3 4.5 L3.8 6.8 L8.1 2.3" fill="none" stroke="#5a5a5a" stroke-width="1.25"/></svg>
<svg class="abs" style="left:490.85px;top:360.4px" width="10" height="10" viewBox="0 0 10 10"><rect x="0.5" y="0.5" width="9" height="8.8" fill="#fff" stroke="#6a6a6a" stroke-width="1"/><path d="M1.3 4.5 L3.8 6.8 L8.1 2.3" fill="none" stroke="#5a5a5a" stroke-width="1.25"/></svg>
<svg class="abs" style="left:545.90px;top:360.4px" width="10" height="10" viewBox="0 0 10 10"><rect x="0.5" y="0.5" width="9" height="8.8" fill="#fff" stroke="#6a6a6a" stroke-width="1"/><path d="M1.3 4.5 L3.8 6.8 L8.1 2.3" fill="none" stroke="#5a5a5a" stroke-width="1.25"/></svg>
<svg class="abs" style="left:600.95px;top:360.4px" width="10" height="10" viewBox="0 0 10 10"><rect x="0.5" y="0.5" width="9" height="8.8" fill="#fff" stroke="#6a6a6a" stroke-width="1"/><path d="M1.3 4.5 L3.8 6.8 L8.1 2.3" fill="none" stroke="#5a5a5a" stroke-width="1.25"/></svg>
<svg class="abs" style="left:656.00px;top:360.4px" width="10" height="10" viewBox="0 0 10 10"><rect x="0.5" y="0.5" width="9" height="8.8" fill="#fff" stroke="#6a6a6a" stroke-width="1"/><path d="M1.3 4.5 L3.8 6.8 L8.1 2.3" fill="none" stroke="#5a5a5a" stroke-width="1.25"/></svg>
<div class="grp" style="left:419px;top:411px;width:372px;height:53px"></div>
<div class="abs" style="left:424px;top:406px;width:62px;height:8px;background:#fff"></div>
<div class="t" style="left:427.10px;top:405.90px;font-size:9.8px;font-weight:700;color:#3a6894;-webkit-text-stroke:0.1px currentColor;transform:scaleX(0.9750);">Select GPIO</div>
<svg class="abs" style="left:435.20px;top:418.3px" width="10" height="10" viewBox="0 0 10 10"><rect x="0.5" y="0.5" width="9" height="8.8" fill="#fff" stroke="#7a7a7a" stroke-width="1"/></svg>
<svg class="abs" style="left:490.25px;top:418.3px" width="10" height="10" viewBox="0 0 10 10"><rect x="0.5" y="0.5" width="9" height="8.8" fill="#fff" stroke="#7a7a7a" stroke-width="1"/></svg>
<svg class="abs" style="left:545.30px;top:418.3px" width="10" height="10" viewBox="0 0 10 10"><rect x="0.5" y="0.5" width="9" height="8.8" fill="#fff" stroke="#7a7a7a" stroke-width="1"/></svg>
<svg class="abs" style="left:600.35px;top:418.3px" width="10" height="10" viewBox="0 0 10 10"><rect x="0.5" y="0.5" width="9" height="8.8" fill="#fff" stroke="#7a7a7a" stroke-width="1"/></svg>
<svg class="abs" style="left:655.40px;top:418.3px" width="10" height="10" viewBox="0 0 10 10"><rect x="0.5" y="0.5" width="9" height="8.8" fill="#fff" stroke="#7a7a7a" stroke-width="1"/></svg>
<svg class="abs" style="left:710.45px;top:418.3px" width="10" height="10" viewBox="0 0 10 10"><rect x="0.5" y="0.5" width="9" height="8.8" fill="#fff" stroke="#7a7a7a" stroke-width="1"/></svg>
<svg class="abs" style="left:765.50px;top:418.3px" width="10" height="10" viewBox="0 0 10 10"><rect x="0.5" y="0.5" width="9" height="8.8" fill="#fff" stroke="#7a7a7a" stroke-width="1"/></svg>
<svg class="abs" style="left:435.20px;top:439.7px" width="10" height="10" viewBox="0 0 10 10"><rect x="0.5" y="0.5" width="9" height="8.8" fill="#fff" stroke="#7a7a7a" stroke-width="1"/></svg>
<svg class="abs" style="left:490.25px;top:439.7px" width="10" height="10" viewBox="0 0 10 10"><rect x="0.5" y="0.5" width="9" height="8.8" fill="#fff" stroke="#7a7a7a" stroke-width="1"/></svg>
<svg class="abs" style="left:545.30px;top:439.7px" width="10" height="10" viewBox="0 0 10 10"><rect x="0.5" y="0.5" width="9" height="8.8" fill="#fff" stroke="#7a7a7a" stroke-width="1"/></svg>
<div class="t" style="left:433.29px;top:310.70px;font-size:10px;font-weight:700;color:#1a1a1a;-webkit-text-stroke:0.1px currentColor;transform:scaleX(0.9700);">ALL</div>
<div class="t" style="left:487.14px;top:310.70px;font-size:10px;font-weight:700;color:#1a1a1a;-webkit-text-stroke:0.1px currentColor;transform:scaleX(0.9700);">C1V</div>
<div class="t" style="left:542.18px;top:310.70px;font-size:10px;font-weight:700;color:#1a1a1a;-webkit-text-stroke:0.1px currentColor;transform:scaleX(0.9700);">C2V</div>
<div class="t" style="left:597.23px;top:310.70px;font-size:10px;font-weight:700;color:#1a1a1a;-webkit-text-stroke:0.1px currentColor;transform:scaleX(0.9700);">C3V</div>
<div class="t" style="left:652.28px;top:310.70px;font-size:10px;font-weight:700;color:#1a1a1a;-webkit-text-stroke:0.1px currentColor;transform:scaleX(0.9700);">C4V</div>
<div class="t" style="left:707.33px;top:310.70px;font-size:10px;font-weight:700;color:#1a1a1a;-webkit-text-stroke:0.1px currentColor;transform:scaleX(0.9700);">C5V</div>
<div class="t" style="left:762.38px;top:310.70px;font-size:10px;font-weight:700;color:#1a1a1a;-webkit-text-stroke:0.1px currentColor;transform:scaleX(0.9700);">C6V</div>
<div class="t" style="left:432.09px;top:343.70px;font-size:10px;font-weight:700;color:#1a1a1a;-webkit-text-stroke:0.1px currentColor;transform:scaleX(0.9700);">C7V</div>
<div class="t" style="left:487.14px;top:343.70px;font-size:10px;font-weight:700;color:#1a1a1a;-webkit-text-stroke:0.1px currentColor;transform:scaleX(0.9700);">C8V</div>
<div class="t" style="left:542.18px;top:343.70px;font-size:10px;font-weight:700;color:#1a1a1a;-webkit-text-stroke:0.1px currentColor;transform:scaleX(0.9700);">C9V</div>
<div class="t" style="left:594.32px;top:343.70px;font-size:10px;font-weight:700;color:#1a1a1a;-webkit-text-stroke:0.1px currentColor;transform:scaleX(0.9700);">C10V</div>
<div class="t" style="left:649.86px;top:343.70px;font-size:10px;font-weight:700;color:#1a1a1a;-webkit-text-stroke:0.1px currentColor;transform:scaleX(0.9700);">C11V</div>
<div class="t" style="left:704.42px;top:343.70px;font-size:10px;font-weight:700;color:#1a1a1a;-webkit-text-stroke:0.1px currentColor;transform:scaleX(0.9700);">C12V</div>
<div class="t" style="left:759.47px;top:343.70px;font-size:10px;font-weight:700;color:#1a1a1a;-webkit-text-stroke:0.1px currentColor;transform:scaleX(0.9700);">C13V</div>
<div class="t" style="left:429.18px;top:372.90px;font-size:10px;font-weight:700;color:#1a1a1a;-webkit-text-stroke:0.1px currentColor;transform:scaleX(0.9700);">C14V</div>
<div class="t" style="left:484.23px;top:372.90px;font-size:10px;font-weight:700;color:#1a1a1a;-webkit-text-stroke:0.1px currentColor;transform:scaleX(0.9700);">C15V</div>
<div class="t" style="left:539.27px;top:372.90px;font-size:10px;font-weight:700;color:#1a1a1a;-webkit-text-stroke:0.1px currentColor;transform:scaleX(0.9700);">C16V</div>
<div class="t" style="left:594.32px;top:372.90px;font-size:10px;font-weight:700;color:#1a1a1a;-webkit-text-stroke:0.1px currentColor;transform:scaleX(0.9700);">C17V</div>
<div class="t" style="left:649.38px;top:372.90px;font-size:10px;font-weight:700;color:#1a1a1a;-webkit-text-stroke:0.1px currentColor;transform:scaleX(0.9700);">C18V</div>
<div class="t" style="left:433.29px;top:429.50px;font-size:10px;font-weight:700;color:#1a1a1a;-webkit-text-stroke:0.1px currentColor;transform:scaleX(0.9700);">ALL</div>
<div class="t" style="left:486.65px;top:429.50px;font-size:10px;font-weight:700;color:#1a1a1a;-webkit-text-stroke:0.1px currentColor;transform:scaleX(0.9700);">G1V</div>
<div class="t" style="left:541.70px;top:429.50px;font-size:10px;font-weight:700;color:#1a1a1a;-webkit-text-stroke:0.1px currentColor;transform:scaleX(0.9700);">G2V</div>
<div class="t" style="left:596.75px;top:429.50px;font-size:10px;font-weight:700;color:#1a1a1a;-webkit-text-stroke:0.1px currentColor;transform:scaleX(0.9700);">G3V</div>
<div class="t" style="left:651.80px;top:429.50px;font-size:10px;font-weight:700;color:#1a1a1a;-webkit-text-stroke:0.1px currentColor;transform:scaleX(0.9700);">G4V</div>
<div class="t" style="left:706.85px;top:429.50px;font-size:10px;font-weight:700;color:#1a1a1a;-webkit-text-stroke:0.1px currentColor;transform:scaleX(0.9700);">G5V</div>
<div class="t" style="left:761.90px;top:429.50px;font-size:10px;font-weight:700;color:#1a1a1a;-webkit-text-stroke:0.1px currentColor;transform:scaleX(0.9700);">G6V</div>
<div class="t" style="left:431.60px;top:452.20px;font-size:10px;font-weight:700;color:#1a1a1a;-webkit-text-stroke:0.1px currentColor;transform:scaleX(0.9700);">G7V</div>
<div class="t" style="left:486.65px;top:452.20px;font-size:10px;font-weight:700;color:#1a1a1a;-webkit-text-stroke:0.1px currentColor;transform:scaleX(0.9700);">G8V</div>
<div class="t" style="left:541.70px;top:452.20px;font-size:10px;font-weight:700;color:#1a1a1a;-webkit-text-stroke:0.1px currentColor;transform:scaleX(0.9700);">G9V</div>
<svg class="abs" style="left:120.5px;top:70.5px" width="10" height="12" viewBox="0 0 10 12"><path d="M0.5 0.5 L0.5 9.5 L2.8 7.5 L4.5 11 L6 10.3 L4.4 7 L7.5 7 Z" fill="#fff" stroke="#444" stroke-width="0.8"/></svg>
</body></html>
